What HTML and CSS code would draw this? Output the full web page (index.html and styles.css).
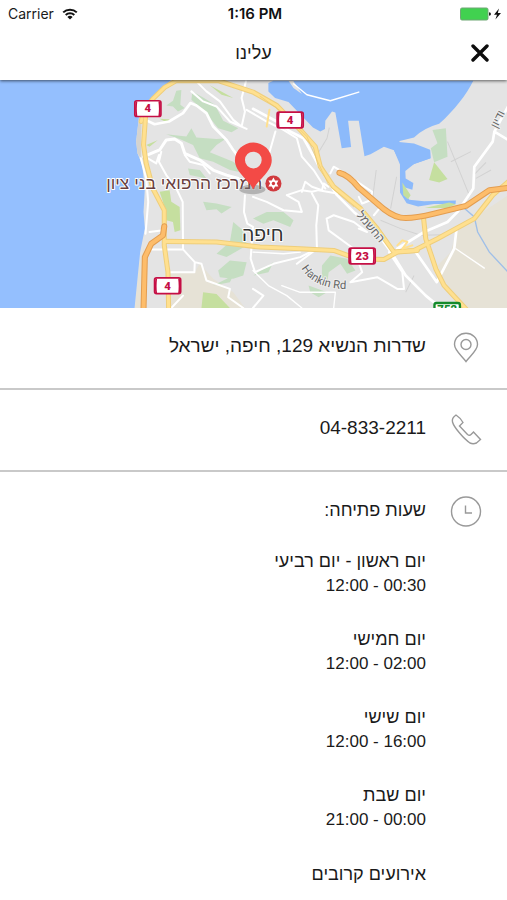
FILE: index.html
```html
<!DOCTYPE html>
<html lang="he" dir="rtl">
<head>
<meta charset="utf-8">
<meta name="viewport" content="width=device-width, initial-scale=1">
<title>עלינו</title>
<link rel="stylesheet" href="styles.css">
</head>
<body>
<header class="top">
  <div class="status" dir="ltr">
    <div class="carrier">
      <span>Carrier</span>
      <svg class="wifi" viewBox="0 0 16 12" aria-hidden="true">
        <path d="M1.2 4.4a9.8 9.8 0 0 1 13.6 0M3.7 7a6.2 6.2 0 0 1 8.6 0" fill="none" stroke="#111" stroke-width="2"/>
        <path d="M5.4 8.9a3.8 3.8 0 0 1 5.2 0L8 11.6z" fill="#111"/>
      </svg>
    </div>
    <span class="clock">1:16 PM</span>
    <svg class="battery" viewBox="0 0 42 14" aria-hidden="true">
      <rect x=".5" y="1" width="27.5" height="12" rx="1.5" fill="#41d150" stroke="#6fa775"/>
      <path d="M29 5.2q2 .2 2 1.8t-2 1.8z" fill="#222"/>
      <path d="M39 1.500 34 7.800h3L35.400 12.500 41 6h-3.200z" fill="#111"/>
    </svg>
  </div>
  <div class="bar">
    <button class="close" type="button" aria-label="סגירה">
      <svg viewBox="0 0 18 18" aria-hidden="true"><path d="M2 2l14 14M16 2 2 16" stroke="#0c0c0c" stroke-width="3.400" stroke-linecap="round"/></svg>
    </button>
    <h1 class="title">עלינו</h1>
  </div>
</header>

<main>
<svg class="map" viewBox="0 6 1521 681" preserveAspectRatio="xMidYMid slice" role="img" aria-label="מפה">
  <rect y="6" width="1521" height="681" fill="#e4e4e4"/>
  <!-- southern and eastern built-up tint -->
  <g fill="#e6e2d6">
    <path d="M500 585 585 580 600 555 640 600 700 640 735 687H515z"/>
    <path d="M1365 460 1400 430 1521 350V687H1400L1330 610 1310 560 1350 520z"/>
    <path d="M418 560 434 500 428 687H406z"/>
  </g>
  <!-- sea -->
  <path d="M0 0H520L470 50 435 80 418 120 410 190 414 225 428 260 436 330 432 400 436 450 422 520 414 600 405 690H0z" fill="#94bffe"/>
  <path d="M418 120 410 190 414 225 424 240 426 120z" fill="#d4d3cf"/>
  <path d="M805 15 820 8H1417C1395 52 1361 95 1315 137Q1268 150 1240 178L1197 188 1192 205 1209 225 1244 222 1288 215 1290 240 1240 257 1214 278 1215 300 1238 314 1235 334 1211 326 1208 340 1226 364 1270 368 1365 366 1364 376 1300 376 1252 384 1218 374 1198 342 1198 250 1180 216 1150 205 1110 228 1092 234 1075 128 1043 128 1052 206 1024 210 1005 103 995 100 975 128 974 152 960 160 938 148 865 72 825 60 805 40z" fill="#8cbafb"/>
  <path d="M1180 190 1240 196 1288 214 1288 240 1240 257 1205 275 1180 216z" fill="#8cbafb"/>
  <path d="M879 8 905 48 880 30 865 8z" fill="#e4e4e4"/>
  <path d="M1380 380 1420 415 1430 460 1465 520 1521 580" fill="none" stroke="#9fbfe8" stroke-width="4"/>
  <!-- parks -->
  <g fill="#c5dec2">
    <path d="M578 40 610 58 645 80 670 128 715 150 695 162 655 150 615 100 575 65z"/>
    <path d="M530 38 545 36 542 80 555 90 535 100 520 85 500 82 520 68z"/>
    <path d="M500 168 560 175 575 150 590 178 650 182 680 180 650 200 630 222 700 250 740 285 690 275 640 250 600 240 580 200 540 182z"/>
    <path d="M565 270 600 275 620 300 570 290zM610 370 650 375 695 385 665 405 650 392 620 395zM700 430 735 460 740 500 680 535 650 525 690 490zM655 575 690 545 740 550 730 590 700 600 660 595zM640 620 700 590 690 610z"/>
    <path d="M759 420 800 400 850 400 880 425 870 445 820 425 790 435zM965 560 990 530 1040 540 1065 575 1040 585 1020 555 985 580 980 620 965 610zM760 590 820 550 805 580zM925 620 980 640 955 655 930 640z"/>
    <path d="M1295 155 1335 150 1338 200 1340 235 1300 252 1290 210 1310 195z"/>
  </g>
  <g fill="#c5df9f">
    <path d="M610 640 650 645 690 687H605zM480 340 510 335 515 370 540 385 542 455 525 460 520 430 500 425 490 370zM440 200 474 186 450 205zM630 22 700 60 665 50zM1285 305 1300 252 1340 302 1315 312zM1205 312 1230 350 1222 362 1208 350zM1272 388 1345 372 1365 377 1340 388zM480 122 515 124 500 132z"/>
  </g>
  <!-- minor grey lines -->
  <g fill="none" stroke="#d2d2d2" stroke-width="3">
    <path d="M987 148 980 180 950 230M1127 275 1115 370M1188 295 1170 390M1340 190 1405 350M1350 250 1410 220M1140 425 1200 450 1260 470 1330 468"/>
    <path d="M1418 290 1455 252M1425 300 1470 275M1215 640 1240 590"/>
  </g>
  <!-- local streets -->
  <g fill="none" stroke="#fff" stroke-width="6" stroke-linejoin="round" stroke-linecap="round">
    <path d="M438 125 465 138 508 130 550 105 572 75 590 82 620 105 640 145 680 185 700 215 715 235" stroke-width="8"/>
    <path d="M575 40 610 70 650 85 690 130 740 152M590 10 620 40 660 70 700 125 725 145 735 100 725 60 738 10"/>
    <path d="M740 95 800 130 850 155 890 180 905 235 940 275 975 330"/>
    <path d="M432 235 480 215 500 185 525 182 545 195 555 225 600 245 640 275 680 290 715 300" stroke-width="9"/>
    <path d="M445 240 470 255 478 230M485 220 478 250 500 290 530 330 549 370 550 510M555 230 570 250 610 260 630 285"/>
    <path d="M424 240 440 300 446 370 438 465M450 460 490 455M455 512H550L585 550 584 580H512M585 550 605 555 620 605 690 630 685 655 730 687"/>
    <path d="M735 350 732 400 742 435 759 445 752 540 765 580 820 555 900 535 950 510"/>
    <path d="M759 92 830 130 870 160 910 180 960 270 1010 350 1060 400 1120 450 1175 525 1215 590 1275 650 1320 687" stroke-width="8"/>
    <path d="M826 160 800 250 759 290M860 350 905 335 935 340 955 335 1010 345M860 350 895 370 905 400 850 395 800 370 759 355"/>
    <path d="M905 340 915 310 935 325 965 335 970 315 985 325M935 345 954 380 948 440 950 510 890 555M979 420 1000 410 1060 430 1100 460 1075 450M979 420 985 455 1060 510 1085 580 1050 610 1130 595 1190 630 1210 630 1205 580 1165 520"/>
    <path d="M990 285 1000 265 1035 285 1085 320 1115 340 1110 365 1085 375 1075 355M1120 410 1145 380"/>
    <path d="M1480 160 1475 190 1420 265 1417 330 1370 400 1340 430 1270 460 1190 510M1480 160 1521 85M1480 160 1521 185M1367 450 1360 510 1308 610 1245 520" stroke-width="8"/>
    <path d="M759 575 805 620 860 650 905 687M759 520 850 525 900 520M845 620 900 640 1005 640 1000 687M880 17 920 50 990 68 1075 42M1365 510 1450 568" stroke-width="4"/>
    <path d="M515 687 550 650M759 630 790 650 759 687"/>
  </g>
  <!-- main roads: casing, then fill -->
  <g fill="none" stroke-linejoin="round" stroke-linecap="round">
    <g stroke="#efce7b" stroke-width="15">
      <path d="M425 130 432 100 460 62 495 28 530 8H655L759 42 830 82 905 160 945 205 960 265 1000 325 1080 390 1130 450 1180 520 1240 515 1310 480 1420 420 1475 350 1521 310"/>
      <path d="M438 115 432 200 440 255 460 330 494 395 494 500 505 580 507 690"/>
      <path d="M496 488 650 490 780 505 900 510 1000 515 1070 540 1150 542 1190 520 1250 515"/>
      <path d="M1268 415 1275 480 1305 570 1330 620 1395 690"/>
    </g>
    <g stroke="#ffe08f" stroke-width="9">
      <path d="M425 130 432 100 460 62 495 28 530 8H655L759 42 830 82 905 160 945 205 960 265 1000 325 1080 390 1130 450 1180 520 1240 515 1310 480 1420 420 1475 350 1521 310"/>
      <path d="M438 115 432 200 440 255 460 330 494 395 494 500 505 580 507 690"/>
      <path d="M496 488 650 490 780 505 900 510 1000 515 1070 540 1150 542 1190 520 1250 515"/>
      <path d="M1268 415 1275 480 1305 570 1330 620 1395 690"/>
      <path d="M1190 500 1205 485 1220 490 1205 510 1235 500M800 145 808 95" stroke-width="6"/>
    </g>
    <path d="M780 54 850 105 920 175 950 245 985 320 1060 385" stroke="#eac76f" stroke-width="2"/>
    <path d="M494 443 490 470 455 495 436 535 432 690M1017 283Q1045 290 1075 328L1130 375Q1170 412 1200 417T1300 405L1395 382 1465 335 1521 328" stroke="#e39d50" stroke-width="18"/>
    <path d="M494 443 490 470 455 495 436 535 432 690M1017 283Q1045 290 1075 328L1130 375Q1170 412 1200 417T1300 405L1395 382 1465 335 1521 328" stroke="#fdbd6b" stroke-width="12"/>
  </g>
  <!-- road shields -->
  <g class="shield">
    <g stroke="#c50f45" stroke-width="5" fill="#fff">
      <rect x="406" y="68" width="78" height="47" rx="6"/>
      <rect x="831" y="102" width="78" height="47" rx="6"/>
      <rect x="465" y="597" width="78" height="47" rx="6"/>
      <rect x="1046" y="508" width="78" height="47" rx="6"/>
    </g>
    <g fill="none" stroke="#c50f45" stroke-width="5">
      <path d="M411 70q-3 22 0 44M479 70q3 22 0 44M836 104q-3 22 0 44M904 104q3 22 0 44M470 599q-3 22 0 44M538 599q3 22 0 44M1051 510q-3 22 0 44M1119 510q3 22 0 44"/>
    </g>
    <text x="445" y="103">4</text>
    <text x="870" y="137">4</text>
    <text x="504" y="632">4</text>
    <text x="1085" y="543">23</text>
    <rect x="1301" y="672" width="76" height="40" rx="6" fill="#fff" stroke="#148a2b" stroke-width="7"/>
    <text class="green" x="1339" y="702">752</text>
  </g>
  <!-- place labels -->
  <text class="place" x="554" y="332">המרכז הרפואי בני ציון</text>
  <text class="city" x="788" y="488">חיפה</text>
  <path id="hankin" d="M904 568Q940 632 1045 630" fill="none"/>
  <text class="road"><textPath href="#hankin">Hankin Rd</textPath></text>
  <text class="road-he" transform="translate(1102 452) rotate(50)">החשמל</text>
  <text class="road-he" transform="translate(1500 128) rotate(-63)">ודיון</text>
  <!-- hospital badge -->
  <circle cx="820" cy="315" r="24" fill="#d03a3e"/>
  <path d="M820 297 835 324H805zM820 333 805 306H835z" fill="#fff"/>
  <circle cx="820" cy="315" r="5" fill="#d03a3e"/>
  <!-- location marker -->
  <ellipse cx="757" cy="333" rx="39" ry="14" fill="#777" opacity=".45"/>
  <path fill-rule="evenodd" d="M760 333C746 304 705 281 705 246a55 53 0 0 1 110 0C815 281 774 304 760 333zM760 220a25 25 0 1 0 0 50 25 25 0 0 0 0-50z" fill="#f34a46"/>
</svg>

<section class="row">
  <svg class="icon" viewBox="0 0 32 32" aria-hidden="true"><path d="M16 29.500C12 24 4.500 18.500 4.500 12.500a11.500 11.200 0 0 1 23 0C27.500 18.500 20 24 16 29.500z"/><circle cx="16" cy="12.500" r="5"/></svg>
  <p class="text address">שדרות הנשיא 129, חיפה, ישראל</p>
</section>
<section class="row">
  <svg class="icon" viewBox="0 0 32 32" aria-hidden="true"><path d="M6 1Q1.500 4 2.500 8C4 13.500 14 25 20 29Q23 30.500 26.500 29L30.500 25.500 23.500 18 21 20.500Q19.500 22 17.500 20.500L9.500 12 13 8.500Q10 3.500 6 1z"/></svg>
  <p class="text"><a class="phone" href="tel:048332211" dir="ltr">04-833-2211</a></p>
</section>
<section class="row hours">
  <svg class="icon" viewBox="0 0 32 32" aria-hidden="true"><circle cx="16" cy="15.500" r="14.500"/><path d="M15.500 9.500V17H22"/></svg>
  <div class="schedule">
    <h2 class="text">שעות פתיחה:</h2>
    <dl class="days">
      <div><dt>יום ראשון - יום רביעי</dt><dd dir="ltr">12:00 - 00:30</dd></div>
      <div><dt>יום חמישי</dt><dd dir="ltr">12:00 - 02:00</dd></div>
      <div><dt>יום שישי</dt><dd dir="ltr">12:00 - 16:00</dd></div>
      <div><dt>יום שבת</dt><dd dir="ltr">21:00 - 00:00</dd></div>
    </dl>
    <h2 class="text">אירועים קרובים</h2>
  </div>
</section>
</main>
</body>
</html>
```

FILE: styles.css
```css
* { box-sizing: border-box; }

body {
  margin: 0;
  background: #fff;
  color: #1a1a1a;
  font-family: "Liberation Sans", Arial, sans-serif;
}

h1, h2, p, dl, dd { margin: 0; font-weight: 400; }

.top {
  position: relative;
  background: #fff;
  box-shadow: 0 1px 3px rgba(0, 0, 0, .6);
}

.status {
  display: grid;
  grid-template-columns: 1fr auto 1fr;
  align-items: center;
  height: 28px;
  padding: 0 5px 0 8px;
  font: 14px/28px Inter, sans-serif;
}
.carrier { display: flex; align-items: center; gap: 8px; }
.wifi { width: 16px; height: 12px; }
.clock { font-size: 15px; font-weight: 600; color: #111; }
.battery { width: 42px; height: 14px; justify-self: end; }

.bar {
  display: grid;
  grid-template-columns: 54px 1fr 54px;
  align-items: center;
  height: 52px;
  padding-bottom: 2px;
}
.close {
  display: flex;
  align-items: center;
  justify-content: center;
  height: 50px;
  padding: 0;
  border: 0;
  background: none;
}
.close svg { width: 18px; height: 18px; }
.title { font-size: 18px; line-height: 24px; text-align: center; }

.map { display: block; width: 100%; height: 228px; }
.shield text {
  font: 900 34px Roboto, sans-serif;
  fill: #c50f45;
  text-anchor: middle;
}
.shield .green { fill: #148a2b; }
.place, .city, .road, .road-he {
  font-family: "Liberation Sans", Arial, sans-serif;
  paint-order: stroke;
  stroke: #fff;
  stroke-width: 6px;
  stroke-linejoin: round;
}
.place { font-size: 52px; fill: #693f40; text-anchor: middle; }
.city { font-size: 58px; fill: #333; text-anchor: middle; }
.road { font: 34px Roboto, sans-serif; fill: #666; direction: ltr; stroke: #eee; }
.road-he { font-size: 34px; fill: #666; text-anchor: middle; stroke: #eee; }

.row {
  display: flex;
  align-items: flex-start;
  gap: 24px;
  min-height: 82px;
  padding: 24px 25px 0;
  border-bottom: 2px solid #c9c9c9;
}
.icon {
  flex: none;
  width: 32px;
  height: 32px;
  fill: none;
  stroke: #999;
  stroke-width: 1.4;
}
.text { font-size: 18px; line-height: 28px; }
.address, .phone { font-size: 19px; }
.phone { color: inherit; text-decoration: none; }

.hours { border-bottom: 0; }
.schedule { flex: 1; }
.days { display: grid; gap: 28px; margin: 24px 0 28px; }
.days dt { font-size: 18px; line-height: 26px; }
.days dd { font-size: 17px; line-height: 24px; text-align: right; }
```
